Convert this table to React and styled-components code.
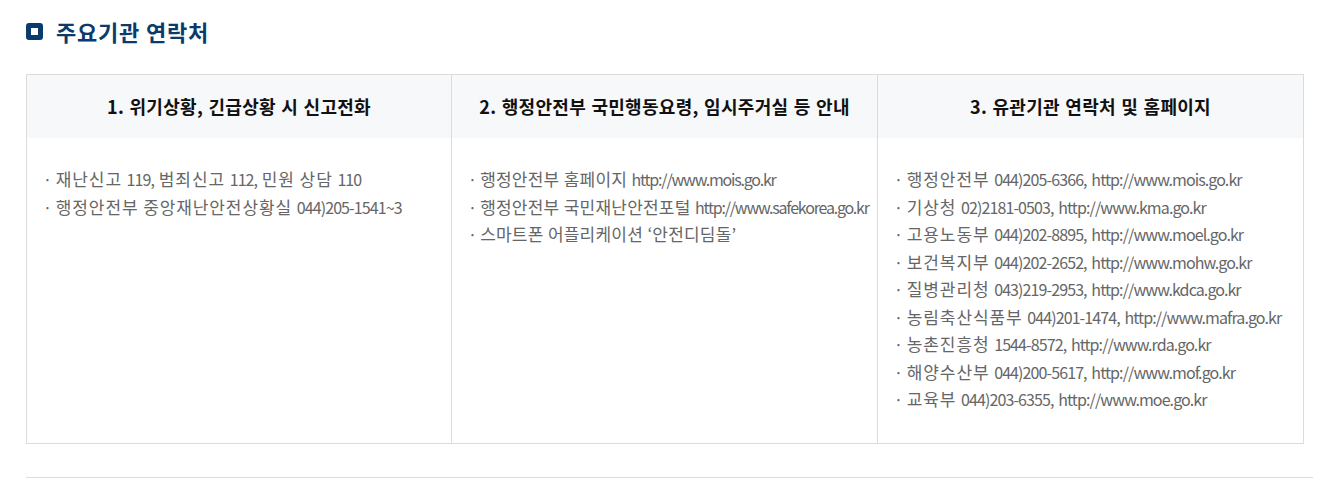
import React from "react";
import styled, { createGlobalStyle } from "styled-components";

const Global = createGlobalStyle`
  html, body { margin: 0; padding: 0; background: #fff; }
  body { font-family: "Noto Sans CJK KR", "Noto Sans", sans-serif; }
`;

const Page = styled.div`
  padding: 15px 30px 0 26px;
`;

const TitleRow = styled.h2`
  display: flex;
  align-items: center;
  gap: 13px;
  margin: 0;
  height: 32px;
  font-size: 22px;
  font-weight: 700;
  color: #0b3a6c;
  letter-spacing: 0.8px;
`;

const TitleIcon = styled.span`
  width: 17px;
  height: 17px;
  box-sizing: border-box;
  border: 5px solid #0b3a6c;
  border-radius: 3px;
  background: #fff;
  flex: none;
`;

const Table = styled.div`
  margin-top: 27px;
  width: 1278px;
  display: grid;
  grid-template-columns: 424px 426px 1fr;
  border: 1px solid #dcdcdc;
  box-sizing: border-box;
`;

const Head = styled.div`
  height: 63px;
  display: flex;
  align-items: center;
  justify-content: center;
  background: #f7f8fa;
  border-left: ${(p) => (p.$first ? "none" : "1px solid #dcdcdc")};
`;

const HeadText = styled.span`
  font-size: 18px;
  font-weight: 700;
  color: #111;
  letter-spacing: 0.3px;
  word-spacing: 1px;
  white-space: pre;
  margin-top: -2px;
`;

const Body = styled.ul`
  list-style: none;
  margin: 0;
  padding: 27px 10px 30px 16px;
  border-left: ${(p) => (p.$first ? "none" : "1px solid #dcdcdc")};
`;

const Item = styled.li`
  font-size: 16px;
  line-height: 27.5px;
  height: 27.5px;
  color: #666;
  letter-spacing: ${(p) => (p.$tight ? "-1.2px" : "-0.9px")};
  word-spacing: 2px;
  white-space: pre;
`;

const Ko = styled.span`
  font-size: 17px;
  letter-spacing: ${(p) => (p.$tight ? "0.2px" : "0.9px")};
`;

const Rule = styled.hr`
  margin: 33px 0 0;
  width: 1287px;
  border: none;
  border-top: 1px solid #dcdcdc;
`;

const HANGUL = /([\u3131-\u318E\uAC00-\uD7A3‘’]+)/;

function Runs({ text, tight }) {
  return text.split(HANGUL).map((part, i) =>
    i % 2 === 1 ? (
      <Ko key={i} $tight={tight}>
        {part}
      </Ko>
    ) : (
      part
    )
  );
}

const cols = [
  {
    title: "1. 위기상황, 긴급상황 시 신고전화",
    items: ["재난신고 119, 범죄신고 112, 민원 상담 110", "행정안전부 중앙재난안전상황실 044)205-1541~3"],
  },
  {
    title: "2. 행정안전부 국민행동요령, 임시주거실 등 안내",
    tight: true,
    items: [
      "행정안전부 홈페이지 http://www.mois.go.kr",
      "행정안전부 국민재난안전포털 http://www.safekorea.go.kr",
      "스마트폰 어플리케이션 ‘안전디딤돌’",
    ],
  },
  {
    title: "3. 유관기관 연락처 및 홈페이지",
    items: [
      "행정안전부 044)205-6366, http://www.mois.go.kr",
      "기상청 02)2181-0503, http://www.kma.go.kr",
      "고용노동부 044)202-8895, http://www.moel.go.kr",
      "보건복지부 044)202-2652, http://www.mohw.go.kr",
      "질병관리청 043)219-2953, http://www.kdca.go.kr",
      "농림축산식품부 044)201-1474, http://www.mafra.go.kr",
      "농촌진흥청 1544-8572, http://www.rda.go.kr",
      "해양수산부 044)200-5617, http://www.mof.go.kr",
      "교육부 044)203-6355, http://www.moe.go.kr",
    ],
  },
];

export default function App() {
  return (
    <Page>
      <Global />
      <TitleRow>
        <TitleIcon />
        주요기관 연락처
      </TitleRow>
      <Table>
        {cols.map((c, i) => (
          <Head key={"h" + i} $first={i === 0}>
            <HeadText>{c.title}</HeadText>
          </Head>
        ))}
        {cols.map((c, i) => (
          <Body key={"b" + i} $first={i === 0}>
            {c.items.map((t) => (
              <Item key={t} $tight={c.tight}>
                <Runs text={"· " + t} tight={c.tight} />
              </Item>
            ))}
          </Body>
        ))}
      </Table>
      <Rule />
    </Page>
  );
}
